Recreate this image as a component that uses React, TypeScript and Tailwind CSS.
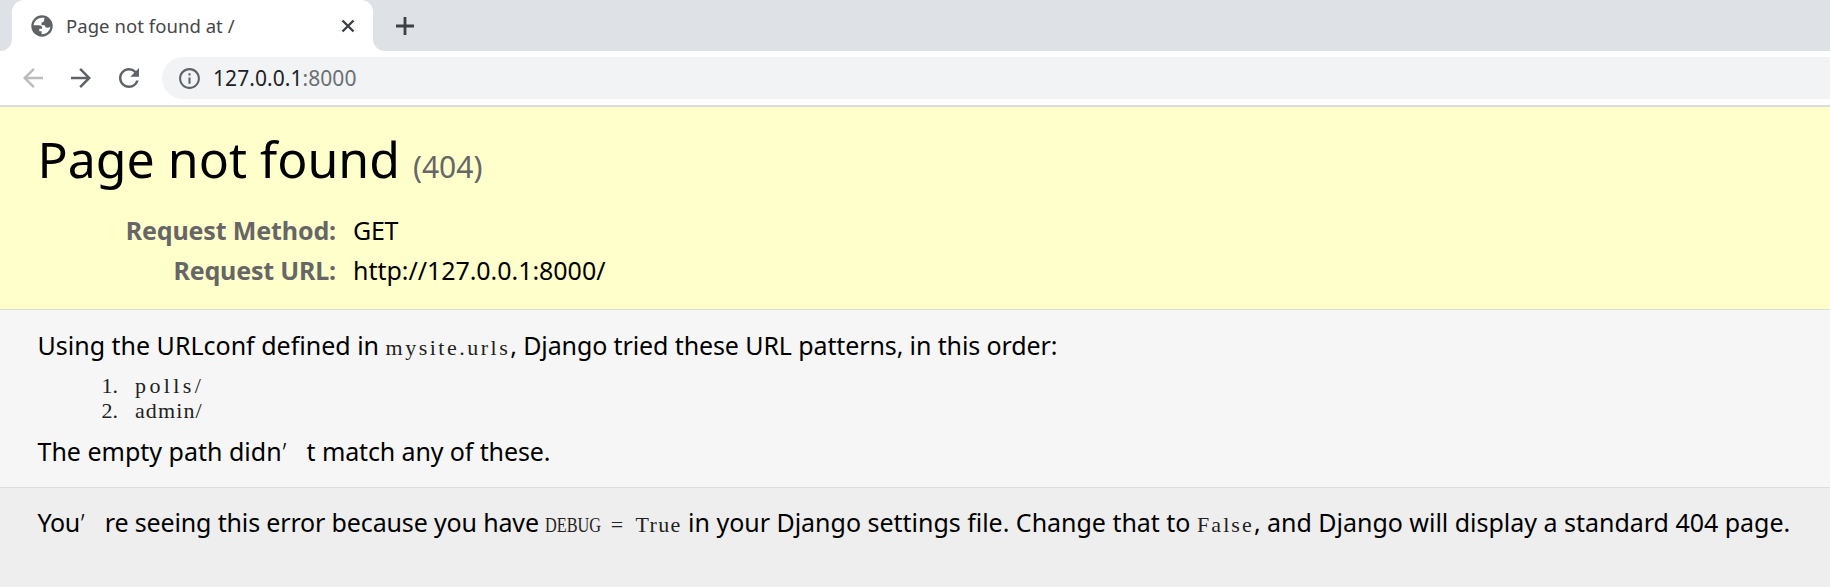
import type { ReactNode } from 'react';
import { MdArrowBack, MdArrowForward, MdInfoOutline, MdRefresh } from 'react-icons/md';

function Globe() {
  return (
    <svg className="size-[22px] shrink-0" viewBox="0 0 22 22">
      <circle cx="11" cy="11" r="10.7" fill="#5f6368" />
      <path
        d="M10.6 2.7C6.3 2.9 3 6.1 2.7 10.2h5.1c2 0 3.3.9 3.3 2.4v1.1H8.3v2.6h2.3v2.9c4.3.2 8.3-2.8 8.7-7.7-.8.9-1.7 1.3-2.9 1.3-1.7 0-2.6-.9-2.6-2.500h-3.3V7.400c1.9 0 2.6-.8 2.6-2.3 0-1 .1-1.6.7-2.1-.9-.3-2-.4-3.200-.3z"
        fill="#fff"
      />
    </svg>
  );
}

function TabStrip() {
  return (
    <div className="flex h-[51px] bg-[#dee1e6]">
      <div className="w-3 bg-white">
        <div className="h-full rounded-br-[12px] bg-[#dee1e6]" />
      </div>
      <div className="flex w-[361px] items-center bg-[#dee1e6]">
        <div className="flex h-full w-full items-center rounded-t-[12px] bg-white pl-[19px] pr-[18px]">
          <Globe />
          <span className="ml-[13px] grow text-[18.5px] leading-[28px] tracking-[0.05px] text-[#45474a]">
            Page not found at /
          </span>
          <svg className="size-[14px]" viewBox="0 0 14 14" stroke="#3c4043" strokeWidth="2.4">
            <path d="M1.5 1.5l11 11M12.5 1.5l-11 11" />
          </svg>
        </div>
      </div>
      <div className="grow bg-white">
        <div className="flex h-full items-center rounded-bl-[12px] bg-[#dee1e6] pl-[23px]">
          <svg className="size-[18px]" viewBox="0 0 18 18" stroke="#3c4043" strokeWidth="2.8">
            <path d="M9 0v18M0 9h18" />
          </svg>
        </div>
      </div>
    </div>
  );
}

function Toolbar() {
  return (
    <div className="flex h-[56px] items-center border-b-2 border-[#dadbdc] bg-white pl-[18px]">
      <MdArrowBack className="size-[30px] shrink-0 text-[#babcbe]" />
      <MdArrowForward className="ml-[18px] size-[30px] shrink-0 text-[#5f6368]" />
      <MdRefresh className="ml-[18px] size-[30px] shrink-0 text-[#5f6368]" />
      <div className="ml-[18px] flex h-[42px] grow items-center rounded-l-full bg-[#f1f3f4] pl-[15px]">
        <MdInfoOutline className="size-[25px] shrink-0 text-[#5f6368]" />
        <span className="ml-[11px] text-[21px] leading-[30px] tracking-[0.06px] text-[#202124]">
          127.0.0.1<span className="text-[#6b6f73]">:8000</span>
        </span>
      </div>
    </div>
  );
}

function Code({ className, children }: { className: string; children: ReactNode }) {
  return <code className={`font-['Liberation_Serif',serif] text-[22px] leading-none text-[#222] ${className}`}>{children}</code>;
}

function Apostrophe() {
  return <span className="inline-block w-[25px] pl-px font-light leading-none">’</span>;
}

function Summary() {
  return (
    <header className="h-[203px] border-b border-[#ddd] bg-[#ffffcc] pt-[23px]">
      <h1 className="pl-[37.5px] text-[50px] leading-[59px]">
        Page not found <span className="text-[30px] leading-none text-[#666]">(404)</span>
      </h1>
      <dl className="mt-[21px] grid grid-cols-[336px_1fr] gap-x-[17px] leading-10">
        <dt className="text-right font-bold tracking-[-0.13px] text-[#666]">Request Method:</dt>
        <dd className="tracking-[-0.3px]">GET</dd>
        <dt className="text-right font-bold tracking-[-0.16px] text-[#666]">Request URL:</dt>
        <dd className="tracking-[-0.04px]">http://127.0.0.1:8000/</dd>
      </dl>
    </header>
  );
}

function Info() {
  return (
    <main className="h-[178px] border-b border-[#ddd] bg-[#f6f6f6] pl-[37.5px] pt-[15px] leading-10">
      <p>
        Using the URLconf defined in <Code className="tracking-[2.5px]">mysite.urls</Code>
        <span className="tracking-[-0.11px]">, Django tried these URL patterns, in this order:</span>
      </p>
      <ol className="my-2 pl-[64px] font-['Liberation_Serif',serif] text-[22px] leading-[25px] text-[#222]">
        <li className="flex">
          <span className="w-[33.5px]">1.</span>
          <span className="tracking-[3.4px]">polls/</span>
        </li>
        <li className="flex">
          <span className="w-[33.5px]">2.</span>
          <span className="tracking-[1.1px]">admin/</span>
        </li>
      </ol>
      <p>
        The empty path didn
        <Apostrophe />
        <span className="tracking-[-0.12px]">t match any of these.</span>
      </p>
    </main>
  );
}

function Explanation() {
  return (
    <footer className="h-[99px] whitespace-nowrap bg-[#eeeeee] pl-[37.5px] pt-[14px] leading-10">
      <p>
        <span className="tracking-[-0.4px]">You</span>
        <Apostrophe />
        <span className="tracking-[-0.15px]">re seeing this error because you have </span>
        <Code className="whitespace-pre">
          <span className="inline-block w-[56.5px] origin-left scale-x-[0.74]">DEBUG</span>
          <span className="tracking-[3.5px]"> = </span>
          <span className="tracking-[1.3px]">True</span>
        </Code>
        <span className="tracking-[-0.02px]"> in your Django settings file. Change that to </span>
        <Code className="tracking-[2.1px]">False</Code>
        <span className="tracking-[-0.02px]">, and Django will display a standard 404 page.</span>
      </p>
    </footer>
  );
}

export default function App() {
  return (
    <div className="h-[587px] w-[1830px] overflow-hidden bg-[#eeeeee] font-['Noto_Sans',sans-serif] text-[25px] text-black">
      <TabStrip />
      <Toolbar />
      <Summary />
      <Info />
      <Explanation />
    </div>
  );
}
